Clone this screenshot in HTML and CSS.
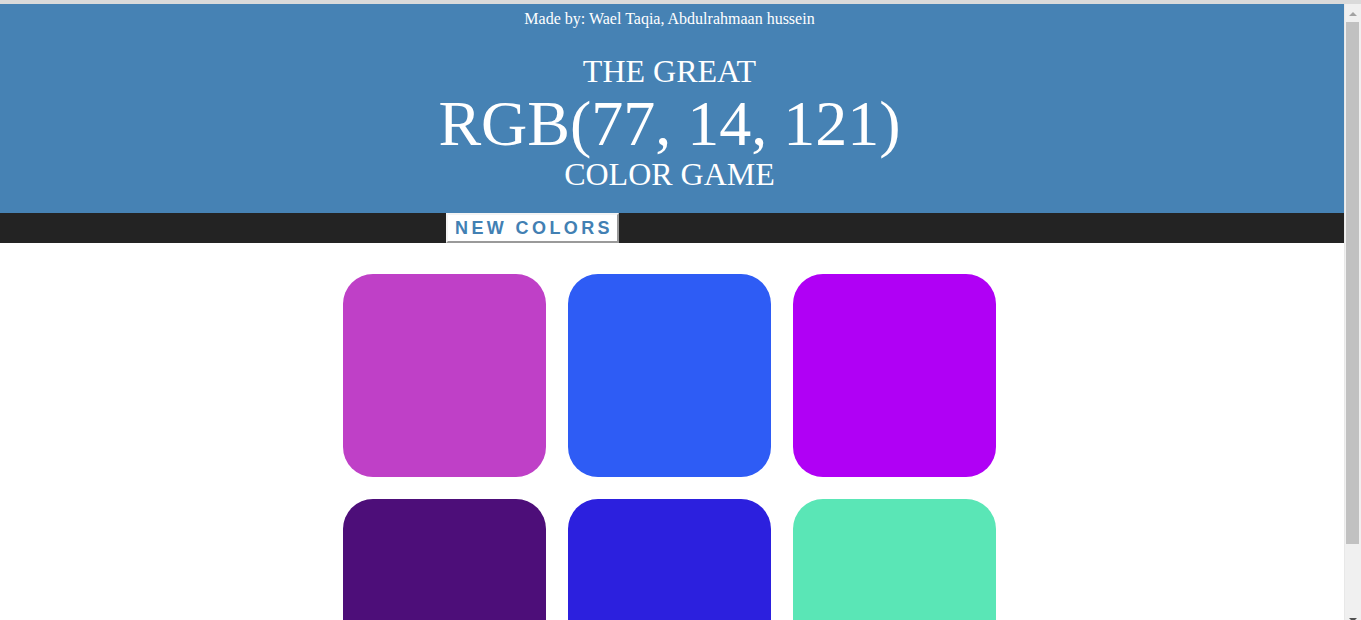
FILE: index.html
```html
<!DOCTYPE html>
<html lang="en">
<head>
<meta charset="utf-8">
<title>Color Game</title>
<link rel="stylesheet" href="styles.css">
</head>
<body>
<header class="header">
  <p class="credit">Made by: Wael Taqia, Abdulrahmaan hussein</p>
  <h1 class="title">
    <span class="title-small">THE GREAT</span>
    <span class="title-rgb">RGB(77, 14, 121)</span>
    <span class="title-game">COLOR GAME</span>
  </h1>
</header>
<div class="stripe">
  <button class="new-colors">NEW COLORS</button>
</div>
<main class="board">
  <div class="square sq1"></div>
  <div class="square sq2"></div>
  <div class="square sq3"></div>
  <div class="square sq4"></div>
  <div class="square sq5"></div>
  <div class="square sq6"></div>
</main>
<div class="scrollbar" aria-hidden="true">
  <span class="scroll-up"></span>
  <span class="scroll-thumb"></span>
  <span class="scroll-down"></span>
</div>
</body>
</html>
```
FILE: styles.css
```css
html {
  border-top: 4px solid #dadada;
}
body {
  margin: 0 17px 0 0;
  font-family: "Liberation Serif", "Times New Roman", serif;
  background: #ffffff;
}
.header {
  background: #4682b4;
  color: #ffffff;
  text-align: center;
  padding: 5px 5px 23px 0;
}
.credit {
  margin: 0;
  font-size: 16px;
  line-height: 20px;
}
.title {
  margin: 23px 0 0;
  font-weight: normal;
}
.title span {
  display: block;
}
.title-small {
  font-size: 32px;
  line-height: 38px;
}
.title-rgb {
  font-size: 64px;
  line-height: 68px;
}
.title-game {
  font-size: 32px;
  line-height: 32px;
}
.stripe {
  background: #232323;
  height: 30px;
  display: flex;
  padding-left: 446px;
}
.new-colors {
  box-sizing: border-box;
  height: 30px;
  width: 173px;
  margin: 0;
  padding: 0 0 0 7px;
  text-align: left;
  background: #ffffff;
  color: #4280b3;
  font-family: "Liberation Sans", Arial, sans-serif;
  font-weight: bold;
  font-size: 18px;
  letter-spacing: 3.4px;
  border: 2px solid;
  border-color: #f4f4f4 #9a9a9a #9a9a9a #f4f4f4;
  line-height: 26px;
}
.board {
  width: 658px;
  margin: 31px auto 0;
  display: grid;
  grid-template-columns: repeat(3, 203px);
  gap: 22px;
  padding-bottom: 40px;
}
.square {
  height: 203px;
  border-radius: 30px;
}
.sq1 { background: #bf40c7; }
.sq2 { background: #2e5cf5; }
.sq3 { background: #b000f5; }
.sq4 { background: #4d0e79; }
.sq5 { background: #2c20de; }
.sq6 { background: #5ae6b6; }

/* browser scrollbar as it appears in the capture */
.scrollbar {
  position: fixed;
  top: 4px;
  right: 0;
  bottom: 0;
  width: 17px;
  background: #f0f0f0;
  border-left: 1px solid #e8e8e8;
  box-sizing: border-box;
}
.scroll-up {
  position: absolute;
  top: 8px;
  left: 4px;
  width: 0;
  height: 0;
  border-left: 4px solid transparent;
  border-right: 4px solid transparent;
  border-bottom: 4px solid #a3a3a3;
}
.scroll-thumb {
  position: absolute;
  top: 18px;
  left: 1px;
  width: 13px;
  height: 522px;
  background: #c1c1c1;
}
.scroll-down {
  position: absolute;
  bottom: -2px;
  left: 4px;
  width: 0;
  height: 0;
  border-left: 4px solid transparent;
  border-right: 4px solid transparent;
  border-top: 4px solid #505050;
}
```
